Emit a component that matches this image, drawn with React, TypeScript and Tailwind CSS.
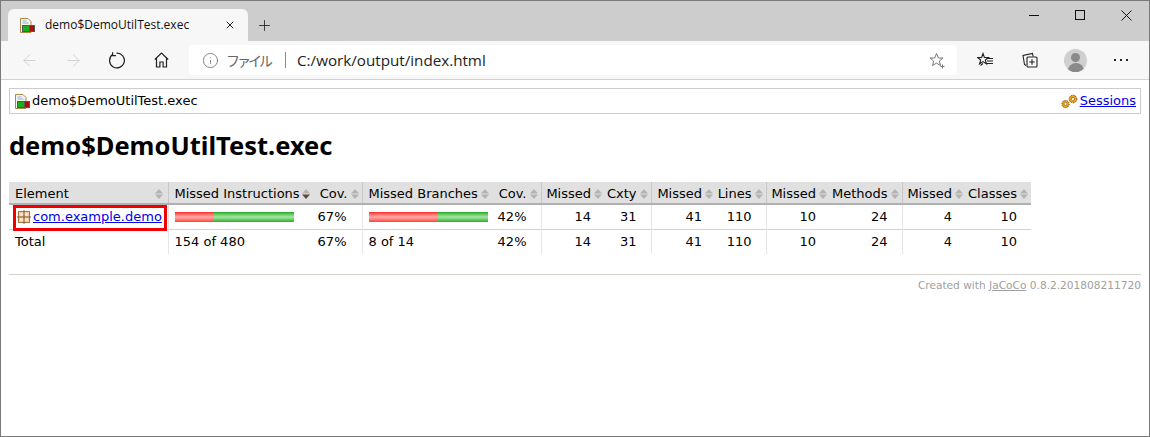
import { ArrowLeft, ArrowRight, Info, X, Plus } from "lucide-react";

const verdana = "font-['DejaVu_Sans','Verdana',sans-serif]";

const ReportIcon = () => (
  <svg width="15" height="15" viewBox="0 0 15 15" className="shrink-0">
    <path d="M.5.5h7.500l3 3v11H.5z" fill="#f6f3ea" stroke="#a58a4a" />
    <path d="M2.500 3h4M2.500 5h6" stroke="#8fb0dc" />
    <rect x="2" y="7" width="13" height="7" fill="#55555a" />
    <rect x="3" y="8" width="6" height="5" fill="#16b01c" />
    <rect x="10" y="8" width="4" height="5" fill="#b00c0c" />
  </svg>
);

const PackageIcon = () => (
  <svg width="14" height="14" viewBox="0 0 14 14" className="shrink-0">
    <rect x="1.500" y="1.500" width="11" height="11" fill="#eccba6" stroke="#a5743f" />
    <path d="M7 0v14M0 7h14" stroke="#8a5a2c" />
    <path d="M3 3h3v3H3zM8 3h3v3H8zM3 8h3v3H3zM8 8h3v3H8z" fill="#f6e3cf" />
  </svg>
);

const Gear = ({ x, y, r }: { x: number; y: number; r: number }) => (
  <g>
    <circle cx={x} cy={y} r={r} fill="#e9a21c" stroke="#7d5a12" strokeWidth="1" strokeDasharray="1.4 0.8" />
    <circle cx={x} cy={y} r={r * 0.4} fill="#fff" stroke="#7d5a12" strokeWidth="0.6" />
  </g>
);

const SessionIcon = () => (
  <svg width="17" height="15" viewBox="0 0 17 15" className="shrink-0">
    <Gear x={4.5} y={10} r={3.6} />
    <Gear x={12} y={5} r={3.8} />
  </svg>
);

const ReloadIcon = () => (
  <svg width="17" height="17" viewBox="0 0 17 17" fill="none" stroke="#222" strokeWidth="1.2" className="shrink-0">
    <path d="M4.500 2.600A7.400 7.400 0 1 0 8.500 1.100" />
    <path d="M4.600 .3v3.400H8" />
  </svg>
);

const HomeIcon = () => (
  <svg width="15" height="16" viewBox="0 0 15 16" fill="none" stroke="#222" strokeWidth="1.2" className="shrink-0">
    <path d="M.8 7.500 7.500 1l6.700 6.500M2.500 6.500V15h3.400v-5h3.200v5h3.400V6.500" />
  </svg>
);

const FavoritesIcon = () => (
  <svg width="16" height="16" viewBox="0 0 16 16" fill="none" stroke="#222" strokeWidth="1.1" className="shrink-0">
    <path d="M6 1.500 7.400 5.500H11.500L8.300 8l1.200 4L6 9.600 2.500 12l1.200-4L.6 5.500h4z" />
    <path d="M3.500 13.500 6 11.500" />
    <path d="M10 6.500h6M10 9h6M10 11.500h6" />
  </svg>
);

const CollectionsIcon = () => (
  <svg width="16" height="16" viewBox="0 0 16 16" fill="none" stroke="#222" strokeWidth="1.1" className="shrink-0">
    <path d="M4 13.500 2.500 12.500 1 3.500 10.500 1.500l.6 3" />
    <rect x="5" y="5" width="10" height="10" rx="1" />
    <path d="M10 7.300v5.400M7.300 10h5.400" />
  </svg>
);

const StarAddIcon = () => (
  <svg width="17" height="17" viewBox="0 0 17 17" fill="none" stroke="#777" strokeWidth="1" className="shrink-0">
    <path d="M7.500 1.500 9.400 6H14l-3.600 3 1.200 4.600-4.100-2.500-4 2.500L4.600 9 1 6h4.700z" />
    <path d="M13.500 12.500v4M11.500 14.500h4" />
  </svg>
);

const Sort = ({ active }: { active?: boolean }) => (
  <svg width="8" height="10" viewBox="0 0 8 10" className="shrink-0">
    <path d="M4 0l4 4.400H0z" fill="#b4b4b4" />
    <path d="M4 10 0 5.600h8z" fill={active ? "#5a4a3c" : "#b4b4b4"} />
  </svg>
);

const Bar = ({ red, green }: { red: number; green: number }) => (
  <div className="flex h-[10px]">
    <div className="h-full bg-gradient-to-b from-[#ff1c1c] via-[#ffa8a8] to-[#ff3c3c]" style={{ width: red }} />
    <div className="h-full bg-gradient-to-b from-[#14ac14] via-[#a4e6a4] to-[#1cae1c]" style={{ width: green }} />
  </div>
);

const columns = [
  { label: "Element", width: 159, left: true, sep: true, pr: "pr-[5px]" },
  { label: "Missed Instructions", width: 145, left: true, active: true, pr: "pr-[3px]" },
  { label: "Cov.", width: 49, sep: true, pr: "pr-[3px]" },
  { label: "Missed Branches", width: 129, left: true, pr: "pr-[2px]" },
  { label: "Cov.", width: 50, sep: true, pr: "pr-[3px]" },
  { label: "Missed", width: 64, pr: "pr-[3px]" },
  { label: "Cxty", width: 46, sep: true, pr: "pr-[3px]" },
  { label: "Missed", width: 65, pr: "pr-[3px]" },
  { label: "Lines", width: 50, sep: true, pr: "pr-[3px]" },
  { label: "Missed", width: 64, pr: "pr-[3px]" },
  { label: "Methods", width: 72, sep: true, pr: "pr-[3px]" },
  { label: "Missed", width: 64, pr: "pr-[3px]" },
  { label: "Classes", width: 65, pr: "pr-[3px]" },
];

const nums = ["14", "31", "41", "110", "10", "24", "4", "10"];

const NumCells = () => (
  <>
    {nums.map((n, i) => (
      <td key={i} className={`pr-[14px] text-right ${i % 2 === 1 && i < 7 ? "border-r border-[#e5e5e5]" : ""}`}>
        {n}
      </td>
    ))}
  </>
);

export default function App() {
  return (
    <div className="flex h-[437px] w-[1150px] flex-col overflow-hidden border border-[#7a7a7a] bg-white font-['Open_Sans',sans-serif]">
      {/* tab strip */}
      <div className="flex h-[40px] items-end bg-[#cdcdcd] pl-[7px]">
        <div className="flex h-[32px] w-[240px] items-center rounded-t-[6px] bg-[#f7f7f7] pl-[12px] pr-[12px]">
          <ReportIcon />
          <span className="ml-[10px] text-[12px] text-[#111]">demo$DemoUtilTest.exec</span>
          <X size={12} strokeWidth={2} className="ml-auto text-[#222]" />
        </div>
        <Plus size={17} strokeWidth={1.2} className="mb-[7px] ml-[8px] text-[#222]" />
        <div className="ml-auto flex h-full items-start text-[#111]">
          <div className="mt-[14px] h-px w-[10px] bg-[#111]" />
          <div className="ml-[36px] mt-[9px] h-[10px] w-[10px] border border-[#111]" />
          <svg width="11" height="11" viewBox="0 0 11 11" className="ml-[36px] mt-[9px] mr-[17px]" stroke="#111" strokeWidth="1">
            <path d="M.5.5l10 10M10.500 .5l-10 10" />
          </svg>
        </div>
      </div>
      {/* toolbar */}
      <div className="flex h-[39px] items-center border-b border-[#d2d2d2] bg-[#f7f7f7] pl-[19px]">
        <ArrowLeft size={19} strokeWidth={1} className="text-[#c9c9c9]" />
        <ArrowRight size={19} strokeWidth={1} className="ml-[25px] text-[#c9c9c9]" />
        <div className="ml-[25px]"><ReloadIcon /></div>
        <div className="ml-[29px]"><HomeIcon /></div>
        <div className="ml-[20px] flex h-[30px] w-[768px] items-center rounded-[4px] bg-white pl-[13px] pr-[11px]">
          <Info size={17} strokeWidth={1} className="text-[#555]" />
          <span className="ml-[7px] font-['Noto_Sans_CJK_JP',sans-serif] text-[14px] tracking-[-3px] text-[#666]">ファイル</span>
          <span className="ml-[15px] h-[16px] w-px bg-[#888]" />
          <span className="ml-[11px] text-[15.200px] text-[#222]">C:/work/output/index.html</span>
          <div className="ml-auto"><StarAddIcon /></div>
        </div>
        <div className="flex flex-1 items-center">
          <div className="ml-[20px]"><FavoritesIcon /></div>
          <div className="ml-[29px]"><CollectionsIcon /></div>
          <div className="ml-[26px] h-[23px] w-[23px] overflow-hidden rounded-full bg-[#cfcfcf]">
            <div className="mx-auto mt-[4px] h-[9px] w-[9px] rounded-full bg-[#8a8a8a]" />
            <div className="mx-auto mt-[1px] h-[10px] w-[16px] rounded-t-full bg-[#8a8a8a]" />
          </div>
          <div className="ml-[27px] flex gap-[4px]">
            <span className="h-[2px] w-[2px] bg-[#222]" />
            <span className="h-[2px] w-[2px] bg-[#222]" />
            <span className="h-[2px] w-[2px] bg-[#222]" />
          </div>
        </div>
      </div>
      {/* page */}
      <div className={`flex-1 pl-[8px] pr-[8px] pt-[8px] text-[13px] text-black ${verdana}`}>
        <div className="flex h-[26px] items-center justify-between border border-[#cccccc] pl-[5px] pr-[4px]">
          <div className="flex items-center">
            <ReportIcon />
            <span className="ml-[2px]">demo$DemoUtilTest.exec</span>
          </div>
          <div className="flex items-center">
            <SessionIcon />
            <a href="#" className="ml-[2px] text-[#0000ee] underline">Sessions</a>
          </div>
        </div>
        <h1 className="mt-[16px] mb-[22px] font-['Noto_Sans',sans-serif] text-[25.500px] leading-[30px] font-bold">demo$DemoUtilTest.exec</h1>
        <table className="table-fixed border-collapse" style={{ width: 1022 }}>
          <colgroup>
            {columns.map((c, i) => (
              <col key={i} style={{ width: c.width }} />
            ))}
          </colgroup>
          <thead>
            <tr className="h-[22px] border-b-2 border-[#b0b0b0] bg-[#e0e0e0]">
              {columns.map((c, i) => (
                <th key={i} className={`p-0 pt-[2px] font-normal ${c.sep ? "border-r border-[#c8c8c8]" : ""}`}>
                  <div className={`flex items-center leading-[18px] ${c.pr} ${c.left ? "justify-between pl-[6px]" : "justify-end gap-[3px]"}`}>
                    <span>{c.label}</span>
                    <Sort active={c.active} />
                  </div>
                </th>
              ))}
            </tr>
          </thead>
          <tbody>
            <tr className="h-[25px] border-b border-[#d6d3ce]">
              <td className="relative border-r border-[#e5e5e5] pl-[8px]">
                <div className="flex items-center">
                  <PackageIcon />
                  <a href="#" className="ml-[2px] text-[#0000ee] underline">com.example.demo</a>
                </div>
                <div className="absolute left-[4px] right-px top-0 -bottom-[2px] border-[3px] border-[#f00000]" />
              </td>
              <td className="pl-[6px]"><Bar red={38} green={81} /></td>
              <td className="border-r border-[#e5e5e5] pr-[15px] text-right">67%</td>
              <td className="pl-[6px]"><Bar red={68} green={51} /></td>
              <td className="border-r border-[#e5e5e5] pr-[14px] text-right">42%</td>
              <NumCells />
            </tr>
            <tr className="h-[25px]">
              <td className="border-r border-[#e5e5e5] pl-[6px]">Total</td>
              <td className="pl-[6px]">154 of 480</td>
              <td className="border-r border-[#e5e5e5] pr-[15px] text-right">67%</td>
              <td className="pl-[6px]">8 of 14</td>
              <td className="border-r border-[#e5e5e5] pr-[14px] text-right">42%</td>
              <NumCells />
            </tr>
          </tbody>
        </table>
        <div className="mt-[20px] border-t border-[#d6d3ce] pt-[2px] text-right text-[10.6px] leading-[16px] text-[#a0a0a0]">
          Created with <a href="#" className="text-[#a0a0a0] underline">JaCoCo</a> 0.8.2.201808211720
        </div>
      </div>
    </div>
  );
}
